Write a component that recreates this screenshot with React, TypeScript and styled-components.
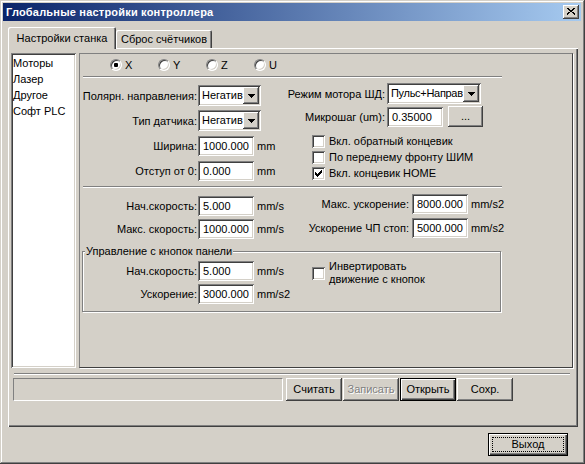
import React from 'react';
import styled, { createGlobalStyle, css } from 'styled-components';

const FACE = '#d4d0c8';
const SHADOW = '#808080';
const DARK = '#404040';
const LIGHT = '#ffffff';

const GlobalStyle = createGlobalStyle`
  html, body { margin: 0; padding: 0; background: ${FACE}; }
  body {
    font-family: 'Liberation Sans', Arial, sans-serif;
    font-size: 11px;
    color: #000;
  }
  * { box-sizing: border-box; }
`;

const raised = css`
  box-shadow: inset -1px -1px 0 ${DARK}, inset 1px 1px 0 ${LIGHT},
    inset -2px -2px 0 ${SHADOW}, inset 2px 2px 0 ${FACE};
`;

const sunken = css`
  box-shadow: inset 1px 1px 0 ${SHADOW}, inset -1px -1px 0 ${LIGHT},
    inset 2px 2px 0 ${DARK}, inset -2px -2px 0 ${FACE};
`;

const Window = styled.div`
  width: 585px;
  height: 464px;
  background: ${FACE};
  padding: 3px 4px 3px 3px;
  display: flex;
  flex-direction: column;
  box-shadow: inset -1px -1px 0 ${DARK}, inset 1px 1px 0 ${FACE},
    inset -2px -2px 0 ${SHADOW}, inset 2px 2px 0 ${LIGHT};
`;

const TitleBar = styled.div`
  height: 18px;
  flex: none;
  background: linear-gradient(to right, #0a246a, #a6caf0);
  display: flex;
  align-items: center;
  justify-content: space-between;
  padding: 0 2px 0 3px;
`;

const TitleText = styled.span`
  color: #fff;
  font-weight: bold;
  font-size: 11px;
  letter-spacing: 0.2px;
  white-space: nowrap;
`;

const CloseButton = styled.div`
  width: 16px;
  height: 14px;
  background: ${FACE};
  ${raised};
  display: flex;
  align-items: center;
  justify-content: center;
  padding-bottom: 1px;
`;

const Body = styled.div`
  flex: 1;
  display: flex;
  flex-direction: column;
  padding: 6px 3px 0 5px;
`;

const TabStrip = styled.div`
  height: 21px;
  display: flex;
  align-items: flex-end;
`;

const Tab = styled.div<{ $active?: boolean; $w: number }>`
  width: ${(p) => p.$w}px;
  height: ${(p) => (p.$active ? 22 : 18)}px;
  margin-bottom: ${(p) => (p.$active ? -1 : 0)}px;
  position: relative;
  z-index: ${(p) => (p.$active ? 1 : 0)};
  background: ${FACE};
  border-radius: 2px 2px 0 0;
  display: flex;
  align-items: center;
  justify-content: center;
  padding-bottom: ${(p) => (p.$active ? 1 : 0)}px;
  white-space: nowrap;
  box-shadow: inset 1px 1px 0 ${LIGHT}, inset -1px 0 0 ${DARK},
    inset -2px 0 0 ${SHADOW};
`;

const TabPanel = styled.div`
  height: 379px;
  flex: none;
  padding: 5px 5px 0 3px;
  display: flex;
  flex-direction: column;
  box-shadow: inset 1px 1px 0 ${LIGHT}, inset -1px -1px 0 ${DARK},
    inset -2px -2px 0 ${SHADOW};
`;

const MainRow = styled.div`
  height: 315px;
  display: flex;
  gap: 3px;
`;

const ListBox = styled.div`
  width: 65px;
  background: #fff;
  ${sunken};
  padding: 2px 2px;
  display: flex;
  flex-direction: column;
`;

const ListItem = styled.div`
  height: 16px;
  line-height: 16px;
  white-space: nowrap;
`;

const Content = styled.div`
  flex: 1;
  border: 1px solid;
  border-color: ${SHADOW} ${DARK} ${DARK} ${SHADOW};
  box-shadow: 1px 1px 0 ${LIGHT};
  display: flex;
  flex-direction: column;
`;

const RadioRow = styled.div`
  height: 22px;
  display: flex;
  align-items: center;
  padding-left: 30px;
`;

const RadioItem = styled.label`
  width: 48px;
  display: flex;
  align-items: center;
  gap: 3px;
`;

const RadioDot = styled.span<{ $on?: boolean }>`
  width: 12px;
  height: 12px;
  border-radius: 50%;
  background: #fff;
  border: 1px solid;
  border-color: ${SHADOW} ${LIGHT} ${LIGHT} ${SHADOW};
  box-shadow: inset 1px 1px 0 ${DARK}, inset -1px -1px 0 ${FACE};
  display: flex;
  align-items: center;
  justify-content: center;
  &::after {
    content: '';
    width: 4px;
    height: 4px;
    border-radius: 1px;
    background: #000;
    display: ${(p) => (p.$on ? 'block' : 'none')};
  }
`;

const Separator = styled.div<{ $w?: number; $ml?: number; $mr?: number; $mt?: number }>`
  height: 2px;
  flex: none;
  ${(p) => (p.$w ? `width: ${p.$w}px;` : '')}
  margin-top: ${(p) => p.$mt ?? 0}px;
  margin-left: ${(p) => p.$ml ?? 0}px;
  margin-right: ${(p) => p.$mr ?? 0}px;
  border-top: 1px solid ${SHADOW};
  border-bottom: 1px solid ${LIGHT};
`;

const Section = styled.div<{ $h?: number }>`
  display: flex;
  ${(p) => (p.$h ? `height: ${p.$h}px;` : '')}
`;

const Column = styled.div<{ $w?: number; $pt: number; $gap: number }>`
  ${(p) => (p.$w ? `width: ${p.$w}px; flex: none;` : 'flex: 1;')}
  padding-top: ${(p) => p.$pt}px;
  display: flex;
  flex-direction: column;
  gap: ${(p) => p.$gap}px;
`;

const FieldRow = styled.div`
  height: 21px;
  display: flex;
  align-items: center;
`;

const Label = styled.span<{ $w: number; $gap?: number }>`
  width: ${(p) => p.$w}px;
  margin-right: ${(p) => p.$gap ?? 1}px;
  text-align: right;
  white-space: nowrap;
  flex: none;
`;

const TextBox = styled.div<{ $w: number }>`
  width: ${(p) => p.$w}px;
  height: 20px;
  flex: none;
  background: #fff;
  ${sunken};
  padding: 0 3px 0 5px;
  display: flex;
  align-items: center;
  white-space: nowrap;
  overflow: hidden;
`;

const Unit = styled.span`
  margin-left: 3px;
  white-space: nowrap;
`;

const Combo = styled.div<{ $w: number }>`
  width: ${(p) => p.$w}px;
  height: 21px;
  flex: none;
  background: #fff;
  ${sunken};
  padding: 2px;
  display: flex;
`;

const ComboText = styled.span<{ $tight?: boolean }>`
  flex: 1;
  overflow: hidden;
  white-space: nowrap;
  padding-left: 2px;
  line-height: 17px;
  letter-spacing: ${(p) => (p.$tight ? '-0.3px' : 'normal')};
`;

const DropButton = styled.span`
  width: 16px;
  height: 17px;
  flex: none;
  background: ${FACE};
  ${raised};
  display: flex;
  align-items: center;
  justify-content: center;
`;

const SmallButton = styled.div<{ $w: number }>`
  width: ${(p) => p.$w}px;
  height: 21px;
  margin-left: 5px;
  background: ${FACE};
  ${raised};
  display: flex;
  align-items: center;
  justify-content: center;
  padding-bottom: 2px;
`;

const CheckList = styled.div<{ $pl: number; $mt: number }>`
  padding-left: ${(p) => p.$pl}px;
  margin-top: ${(p) => p.$mt}px;
  display: flex;
  flex-direction: column;
`;

const CheckRow = styled.label<{ $h?: number }>`
  height: ${(p) => p.$h ?? 16}px;
  display: flex;
  align-items: center;
  gap: 4px;
  white-space: nowrap;
`;

const CheckBox = styled.span`
  width: 13px;
  height: 13px;
  flex: none;
  background: #fff;
  ${sunken};
  display: flex;
  align-items: center;
  justify-content: center;
`;

const CheckText = styled.span`
  line-height: 13px;
`;

const Group = styled.div`
  position: relative;
  width: 419px;
  height: 61px;
  margin: 12px 0 0 2px;
  border: 1px solid ${SHADOW};
  box-shadow: inset 1px 1px 0 ${LIGHT}, 1px 1px 0 ${LIGHT};
  display: flex;
`;

const GroupLegend = styled.span`
  position: absolute;
  top: -7px;
  left: 2px;
  padding: 0 1px;
  line-height: 13px;
  background: ${FACE};
  white-space: nowrap;
`;

const GroupRight = styled.div`
  padding-top: 8px;
  display: flex;
  flex-direction: column;
`;

const BottomRow = styled.div`
  margin-top: 3px;
  height: 23px;
  display: flex;
  gap: 1px;
`;

const StatusField = styled.div`
  width: 270px;
  margin-left: 2px;
  margin-right: 2px;
  border: 1px solid;
  border-color: ${SHADOW} ${LIGHT} ${LIGHT} ${SHADOW};
`;

const Button = styled.div<{ $w: number; $default?: boolean; $disabled?: boolean; $focus?: boolean }>`
  width: ${(p) => p.$w}px;
  height: 23px;
  position: relative;
  background: ${FACE};
  display: flex;
  align-items: center;
  justify-content: center;
  padding-bottom: 1px;
  white-space: nowrap;
  color: ${(p) => (p.$disabled ? SHADOW : '#000')};
  text-shadow: ${(p) => (p.$disabled ? `1px 1px 0 ${LIGHT}` : 'none')};
  ${(p) =>
    p.$default
      ? css`
          box-shadow: inset 0 0 0 1px #000, inset 2px 2px 0 ${LIGHT},
            inset -2px -2px 0 ${DARK}, inset -3px -3px 0 ${SHADOW};
        `
      : raised}
  ${(p) =>
    p.$focus
      ? css`
          &::after {
            content: '';
            position: absolute;
            inset: 4px;
            border: 1px dotted #000;
          }
        `
      : ''}
`;

const Footer = styled.div`
  padding-top: 6px;
  padding-right: 10px;
  display: flex;
  justify-content: flex-end;
`;

const Arrow = () => (
  <svg width="7" height="4" viewBox="0 0 7 4" shapeRendering="crispEdges">
    <rect x="0" y="0" width="7" height="1" fill="#000" />
    <rect x="1" y="1" width="5" height="1" fill="#000" />
    <rect x="2" y="2" width="3" height="1" fill="#000" />
    <rect x="3" y="3" width="1" height="1" fill="#000" />
  </svg>
);

const CheckMark = () => (
  <svg width="7" height="7" viewBox="0 0 7 7" shapeRendering="crispEdges">
    {[2, 3, 4, 3, 2, 1, 0].map((y, x) => (
      <rect key={x} x={x} y={y} width="1" height="3" fill="#000" />
    ))}
  </svg>
);

const CloseGlyph = () => (
  <svg width="8" height="7" viewBox="0 0 8 7" shapeRendering="crispEdges">
    {[0, 1, 2, 3, 4, 5, 6].map((y) => (
      <React.Fragment key={y}>
        <rect x={y < 4 ? y : y + 1} y={y} width="2" height="1" fill="#000" />
        <rect x={y < 4 ? 6 - y : 5 - y} y={y} width="2" height="1" fill="#000" />
      </React.Fragment>
    ))}
  </svg>
);

const Radio = ({ label, on }: { label: string; on?: boolean }) => (
  <RadioItem>
    <RadioDot $on={on} />
    <span>{label}</span>
  </RadioItem>
);

const Check = ({ label, on }: { label: React.ReactNode; on?: boolean }) => (
  <CheckRow>
    <CheckBox>{on && <CheckMark />}</CheckBox>
    <CheckText>{label}</CheckText>
  </CheckRow>
);

const ComboBox = ({ w, value, tight }: { w: number; value: string; tight?: boolean }) => (
  <Combo $w={w}>
    <ComboText $tight={tight}>{value}</ComboText>
    <DropButton>
      <Arrow />
    </DropButton>
  </Combo>
);

export default function App() {
  return (
    <>
      <GlobalStyle />
      <Window>
        <TitleBar>
          <TitleText>Глобальные настройки контроллера</TitleText>
          <CloseButton>
            <CloseGlyph />
          </CloseButton>
        </TitleBar>
        <Body>
          <TabStrip>
            <Tab $active $w={108}>Настройки станка</Tab>
            <Tab $w={96}>Сброс счётчиков</Tab>
          </TabStrip>
          <TabPanel>
            <MainRow>
              <ListBox>
                <ListItem>Моторы</ListItem>
                <ListItem>Лазер</ListItem>
                <ListItem>Другое</ListItem>
                <ListItem>Софт PLC</ListItem>
              </ListBox>
              <Content>
                <RadioRow>
                  <Radio label="X" on />
                  <Radio label="Y" />
                  <Radio label="Z" />
                  <Radio label="U" />
                </RadioRow>
                <Separator $w={419} $ml={3} />
                <Section $h={108}>
                  <Column $w={190} $pt={7} $gap={4}>
                    <FieldRow>
                      <Label $w={117}>Полярн. направления:</Label>
                      <ComboBox w={63} value="Негатив" />
                    </FieldRow>
                    <FieldRow>
                      <Label $w={117}>Тип датчика:</Label>
                      <ComboBox w={63} value="Негатив" />
                    </FieldRow>
                    <FieldRow>
                      <Label $w={117}>Ширина:</Label>
                      <TextBox $w={56}>1000.000</TextBox>
                      <Unit>mm</Unit>
                    </FieldRow>
                    <FieldRow>
                      <Label $w={117}>Отступ от 0:</Label>
                      <TextBox $w={56}>0.000</TextBox>
                      <Unit>mm</Unit>
                    </FieldRow>
                  </Column>
                  <Column $pt={5} $gap={2}>
                    <FieldRow>
                      <Label $w={115} $gap={2}>Режим мотора ШД:</Label>
                      <ComboBox w={94} value="Пульс+Направ" tight />
                    </FieldRow>
                    <FieldRow>
                      <Label $w={115} $gap={2}>Микрошаг (um):</Label>
                      <TextBox $w={56}>0.35000</TextBox>
                      <SmallButton $w={35}>...</SmallButton>
                    </FieldRow>
                    <CheckList $pl={42} $mt={4}>
                      <Check label="Вкл. обратный концевик" />
                      <Check label="По переднему фронту ШИМ" />
                      <Check label="Вкл. концевик HOME" on />
                    </CheckList>
                  </Column>
                </Section>
                <Separator $w={419} $ml={3} />
                <Section>
                  <Column $w={190} $pt={7} $gap={2}>
                    <FieldRow>
                      <Label $w={117}>Нач.скорость:</Label>
                      <TextBox $w={56}>5.000</TextBox>
                      <Unit>mm/s</Unit>
                    </FieldRow>
                    <FieldRow>
                      <Label $w={117}>Макс. скорость:</Label>
                      <TextBox $w={56}>1000.000</TextBox>
                      <Unit>mm/s</Unit>
                    </FieldRow>
                  </Column>
                  <Column $pt={5} $gap={3}>
                    <FieldRow>
                      <Label $w={139} $gap={3}>Макс. ускорение:</Label>
                      <TextBox $w={56}>8000.000</TextBox>
                      <Unit>mm/s2</Unit>
                    </FieldRow>
                    <FieldRow>
                      <Label $w={139} $gap={3}>Ускорение ЧП стоп:</Label>
                      <TextBox $w={56}>5000.000</TextBox>
                      <Unit>mm/s2</Unit>
                    </FieldRow>
                  </Column>
                </Section>
                <Group>
                  <GroupLegend>Управление с кнопок панели</GroupLegend>
                  <Column $w={229} $pt={8} $gap={2}>
                    <FieldRow>
                      <Label $w={114}>Нач.скорость:</Label>
                      <TextBox $w={56}>5.000</TextBox>
                      <Unit>mm/s</Unit>
                    </FieldRow>
                    <FieldRow>
                      <Label $w={114}>Ускорение:</Label>
                      <TextBox $w={56}>3000.000</TextBox>
                      <Unit>mm/s2</Unit>
                    </FieldRow>
                  </Column>
                  <GroupRight>
                    <CheckRow $h={26}>
                      <CheckBox />
                      <CheckText>
                        Инвертировать
                        <br />
                        движение с кнопок
                      </CheckText>
                    </CheckRow>
                  </GroupRight>
                </Group>
              </Content>
            </MainRow>
            <Separator $ml={3} $mr={3} $mt={5} />
            <BottomRow>
              <StatusField />
              <Button $w={56}>Считать</Button>
              <Button $w={56} $disabled>Записать</Button>
              <Button $w={56} $default>Открыть</Button>
              <Button $w={56}>Сохр.</Button>
            </BottomRow>
          </TabPanel>
          <Footer>
            <Button $w={80} $default $focus>Выход</Button>
          </Footer>
        </Body>
      </Window>
    </>
  );
}
